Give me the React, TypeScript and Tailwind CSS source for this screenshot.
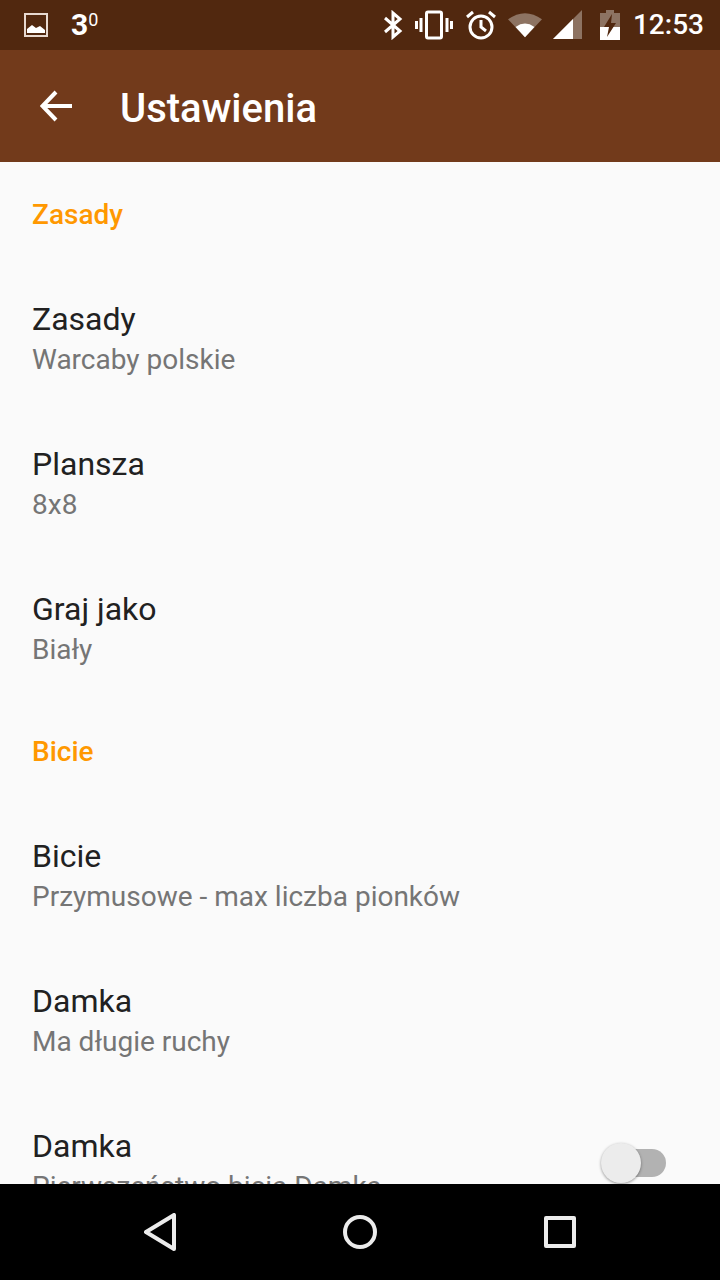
import React from 'react';

const Header: React.FC<{ label: string; className: string }> = ({ label, className }) => (
  <div className={`px-8 pb-[30px] text-[28px] leading-[34px] font-medium text-[#ff9800] ${className}`}>{label}</div>
);

const Row: React.FC<{ title: string; summary: string }> = ({ title, summary }) => (
  <div className="h-[145px] px-8 pt-[36px]">
    <p className="text-[32px] leading-[42px] text-[#212121]">{title}</p>
    <p className="mt-px text-[28px] leading-[38px] text-[#757575]">{summary}</p>
  </div>
);

const StatusIcons = () => (
  <div className="flex items-center">
    <svg width="24" height="30" viewBox="0 0 24 30" className="-ml-[2px] -translate-x-[2px]" fill="none" stroke="#fff" strokeWidth="3">
      <path d="M4 8 L19 21 L12 27 V3 L19 9 L4 22" />
    </svg>
    <svg width="38" height="30" viewBox="0 0 38 30" className="ml-[9px] -translate-x-[1px]" fill="none" stroke="#fff" strokeWidth="3">
      <rect x="11.500" y="2" width="15" height="26" rx="1.500" />
      <path d="M6 8v14M1.500 11v8M32 8v14M36.500 11v8" />
    </svg>
    <svg width="32" height="32" viewBox="0 0 32 32" className="ml-[11px]" fill="none" stroke="#fff" strokeWidth="3">
      <circle cx="16" cy="18" r="11" />
      <path d="M16 11v7l5 4M2 8l6-5M30 8l-6-5" />
    </svg>
    <svg width="34" height="26" viewBox="0 0 36 26" className="ml-[11px]">
      <path d="M0 7 Q18 -6 36 7 L18 26Z" fill="#fff" fillOpacity="0.35" />
      <path d="M8 15 Q18 8 28 15 L18 26Z" fill="#fff" />
    </svg>
    <svg width="30" height="30" viewBox="0 0 30 30" className="ml-[11px]">
      <path d="M0 29 L29 0 V29Z" fill="#fff" fillOpacity="0.35" />
      <path d="M0 29 L20 9 V29Z" fill="#fff" />
    </svg>
    <svg width="20" height="30" viewBox="0 0 20 30" className="ml-[17px]">
      <path d="M0 3H6V0H14V3H20V30H0Z" fill="#fff" fillOpacity="0.35" />
      <path d="M0 17H20V30H0Z" fill="#fff" />
      <path d="M12 4 L4 17 H9 L7 27 L16 13 H11Z" fill="#51280f" />
    </svg>
    <span className="ml-[13px] text-[28px] leading-none font-medium text-white">12:53</span>
  </div>
);

export default function App() {
  return (
    <div className="flex h-[1280px] w-[720px] flex-col overflow-hidden bg-[#fafafa] font-['Roboto',sans-serif]">
      <div className="flex h-[50px] shrink-0 items-center justify-between bg-[#51280f] pl-6 pr-4">
        <div className="flex items-center">
          <svg width="24" height="24" viewBox="0 0 24 24" fill="none">
            <rect x="1" y="1" width="22" height="22" stroke="#e8d9d0" strokeWidth="2" />
            <path d="M3 20V16L8 12L12 15L16 13L21 17V20Z" fill="#fff" />
          </svg>
          <span className="ml-[23px] text-[30px] leading-none font-bold text-white">3</span>
          <span className="mb-[10px] text-[18px] leading-none font-normal text-white">0</span>
        </div>
        <StatusIcons />
      </div>

      <div className="flex h-[112px] shrink-0 items-center bg-[#723a1b] pl-10">
        <svg width="32" height="32" viewBox="0 0 32 32" fill="none" stroke="#fff" strokeWidth="4">
          <path d="M32 16H3M16 2L2.500 16L16 30" />
        </svg>
        <h1 className="ml-12 pt-[5px] text-[40px] leading-none font-medium text-white">Ustawienia</h1>
      </div>

      <div className="min-h-0 flex-1 overflow-hidden">
        <Header label="Zasady" className="pt-[36px]" />
        <Row title="Zasady" summary="Warcaby polskie" />
        <Row title="Plansza" summary="8x8" />
        <Row title="Graj jako" summary="Biały" />
        <Header label="Bicie" className="pt-[38px]" />
        <Row title="Bicie" summary="Przymusowe - max liczba pionków" />
        <Row title="Damka" summary="Ma długie ruchy" />
        <div className="relative">
          <Row title="Damka" summary="Pierwszeństwo bicia Damka" />
          <div className="absolute right-[54px] top-[60px] h-7 w-[46px] rounded-full bg-[#b2b2b2]" />
          <div className="absolute right-[79px] top-[54px] h-10 w-10 rounded-full bg-[#ececec] shadow-[0_1px_3px_rgba(0,0,0,0.4)]" />
        </div>
      </div>

      <div className="flex h-24 shrink-0 items-center justify-center bg-black">
        <div className="flex w-[432px] items-center justify-between">
          <svg width="32" height="38" viewBox="0 0 32 38" fill="none" stroke="#ececec" strokeWidth="4" strokeLinejoin="round">
            <path d="M30 2V36L2 19Z" />
          </svg>
          <svg width="34" height="34" viewBox="0 0 34 34" fill="none" stroke="#ececec" strokeWidth="4">
            <circle cx="17" cy="17" r="15" />
          </svg>
          <svg width="32" height="32" viewBox="0 0 32 32" fill="none" stroke="#ececec" strokeWidth="4" strokeLinejoin="round">
            <rect x="2" y="2" width="28" height="28" />
          </svg>
        </div>
      </div>
    </div>
  );
}
